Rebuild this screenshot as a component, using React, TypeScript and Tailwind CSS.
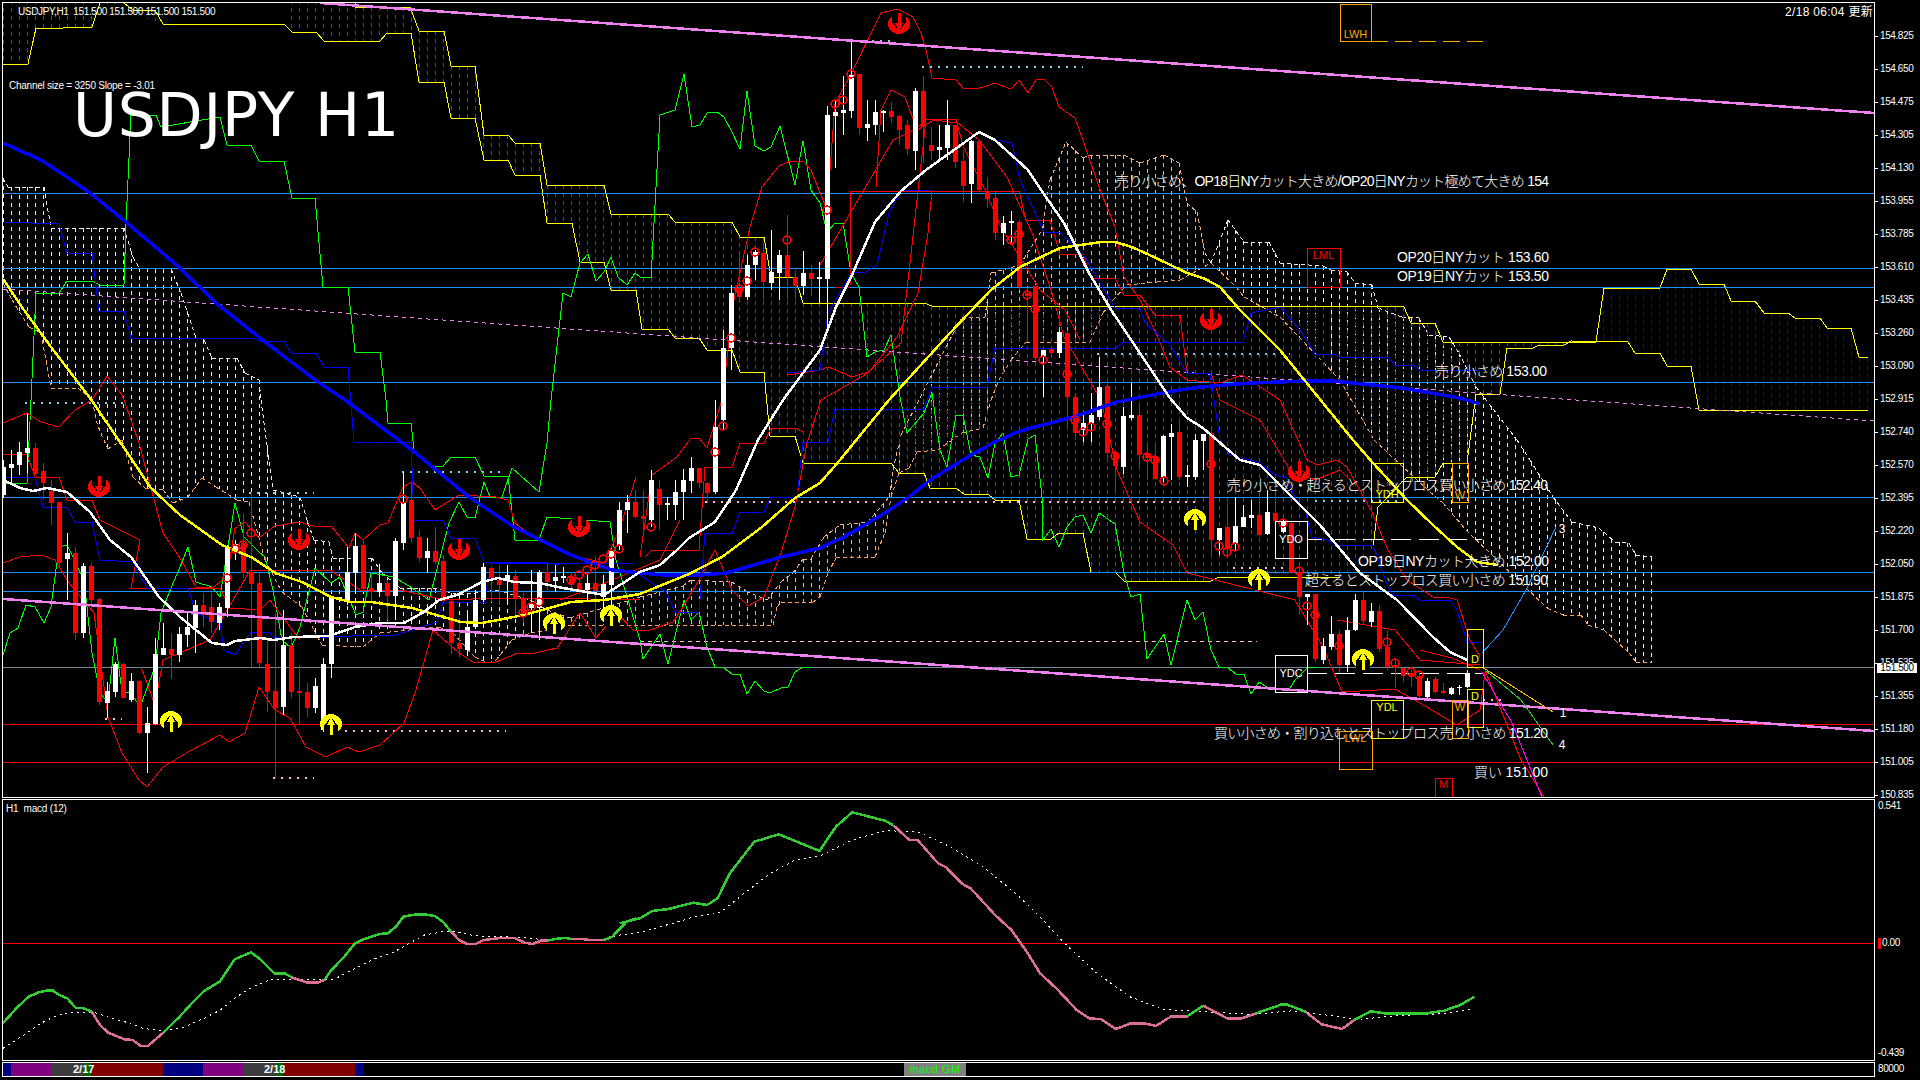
import React from "react";

type Pt = [number, number];

const parse = (s: string): Pt[] =>
  s.trim().split(/\s+/).map((p) => {
    const [x, y] = p.split(",").map(Number);
    return [x, y] as Pt;
  });

const yAt = (pts: Pt[], x: number) => {
  for (let i = 1; i < pts.length; i++) {
    if (x <= pts[i][0]) {
      const [x0, y0] = pts[i - 1];
      const [x1, y1] = pts[i];
      if (x1 === x0) return y1;
      return y0 + ((y1 - y0) * (x - x0)) / (x1 - x0);
    }
  }
  return pts[pts.length - 1][1];
};

// candles: [red?, high, bodyTop, bodyBottom, low], one every 8px from x=3
const candles: number[][] = [
  [0,460,467,495,498],[0,450,464,468,483],[0,442,452,465,475],[0,413,448,453,473],[1,443,448,474,475],[1,463,471,483,500],[1,480,491,503,525],[1,502,502,563,565],
  [0,533,553,559,600],[1,547,553,633,640],[0,563,566,633,638],[1,563,566,600,610],[1,598,599,702,705],[0,682,691,703,718],[0,662,664,692,697],[1,663,664,698,698],
  [0,673,681,700,702],[1,680,681,733,734],[0,707,723,733,773],[0,638,654,724,725],[0,623,648,655,655],[1,633,649,655,679],[0,627,634,655,662],[0,613,627,635,647],
  [0,600,605,628,653],[1,593,605,615,627],[1,593,607,622,633],[0,603,607,623,630],[0,545,548,608,617],[0,540,544,550,560],[1,513,543,573,578],[1,493,572,584,667],
  [1,573,583,663,667],[1,640,664,692,712],[1,613,691,708,778],[0,610,645,707,715],[1,633,645,692,698],[1,665,691,693,725],[1,683,692,708,717],[0,678,686,708,713],
  [0,658,664,730,732],[0,597,598,664,678],[0,597,597,598,600],[0,547,572,600,605],[0,533,546,573,592],[1,540,545,589,592],[1,572,588,592,602],[0,564,583,592,593],
  [1,580,583,596,620],[0,538,541,596,620],[0,472,503,543,550],[1,482,500,538,542],[1,530,537,558,562],[0,538,551,558,573],[1,527,551,562,564],[1,555,561,601,602],
  [1,600,601,643,654],[1,618,643,649,657],[0,613,627,650,656],[0,590,600,627,628],[0,563,567,600,602],[1,567,568,578,602],[1,565,580,585,605],[0,565,575,580,603],
  [1,570,576,599,617],[1,593,598,615,623],[0,570,603,608,633],[0,570,572,608,640],[1,563,572,582,590],[0,565,577,581,592],[0,567,576,578,583],[1,572,577,585,592],
  [1,577,583,590,592],[0,575,583,590,600],[1,557,583,591,640],[0,575,584,597,608],[0,548,550,585,610],[0,502,510,545,550],[0,495,502,510,533],[1,490,502,517,518],
  [1,490,516,519,530],[0,470,480,520,527],[1,480,489,505,530],[0,497,503,505,520],[0,480,492,505,520],[0,469,480,492,520],[0,457,468,481,493],[1,468,468,483,488],
  [1,482,483,493,503],[0,400,427,492,494],[0,330,348,420,430],[0,285,293,348,370],[1,255,288,297,300],[0,255,265,297,300],[0,250,252,265,280],[1,243,253,282,300],
  [0,230,272,283,290],[0,250,255,273,300],[1,215,255,277,300],[1,270,277,286,300],[0,251,273,286,295],[1,265,273,279,296],[0,262,277,279,303],[0,106,115,279,330],
  [0,100,112,116,168],[0,76,110,113,135],[0,42,75,111,118],[1,74,74,128,135],[0,100,124,128,141],[0,100,112,125,135],[0,110,111,113,132],[1,102,111,117,123],
  [1,115,116,130,145],[1,120,125,149,155],[0,88,91,151,170],[1,76,91,127,163],[1,127,145,151,160],[0,125,147,150,160],[0,100,125,148,160],[1,125,125,162,168],
  [1,150,161,186,202],[0,140,141,184,203],[1,140,141,190,192],[1,177,191,199,208],[1,190,198,233,240],[0,216,223,233,245],[0,211,221,223,245],[1,220,222,287,290],
  [1,288,293,296,342],[1,286,286,358,360],[0,350,350,356,397],[1,349,349,353,355],[0,330,332,353,358],[1,330,333,397,430],[1,393,397,433,440],[0,413,423,430,442],
  [0,393,415,423,442],[0,357,387,417,420],[1,380,386,453,462],[1,450,453,466,490],[0,407,416,467,474],[0,383,415,418,420],[1,403,415,455,468],[1,443,453,458,480],
  [1,443,457,479,480],[0,435,436,477,482],[0,424,433,437,480],[1,420,432,477,480],[0,465,475,477,487],[0,434,440,477,480],[0,434,434,441,470],[1,430,433,540,555],
  [0,528,528,540,555],[1,503,527,549,557],[0,497,526,543,550],[0,505,517,527,527],[0,500,515,518,528],[1,493,515,535,537],[0,490,512,534,535],[1,480,513,521,525],
  [0,520,522,532,533],[1,521,523,573,573],[1,568,572,597,615],[0,594,594,597,625],[1,594,594,659,662],[0,638,646,660,664],[0,616,634,647,650],[1,630,634,665,673],
  [0,617,630,665,672],[0,594,600,630,631],[1,592,600,621,624],[0,603,611,622,627],[1,605,611,649,652],[1,630,647,667,670],[1,660,665,668,688],[1,667,668,676,682],
  [1,670,673,677,687],[1,672,676,696,698],[0,678,681,697,698],[1,677,679,692,693],[1,683,691,693,694],[0,687,688,694,695],[0,685,687,688,695],[0,670,673,687,688],
];

const rings = parse(`851,74 835,104 843,100 827,210 787,240 755,252 747,281 739,289 731,338 1011,240 1019,234 1027,295 1035,309 1043,360 1067,374
  235,549 243,545 251,533 227,578 403,499 523,613 531,607 539,602 571,580 579,575 587,570 595,565 603,559 611,554 619,549 651,527 723,426 715,452
  1083,432 1091,427 1107,424 1075,420 1115,456 1147,457 1155,460 1164,481 1211,464 1219,546 1227,552 1235,547 1283,523 1299,571 1307,606 1315,615 1339,646 1387,642 1395,663 1411,672 1419,675`);

const sellSignals = parse("899,24 1211,320 99,487 299,540 459,550 579,527 1299,472");
const buySignals = parse("171,721 331,724 554,623 611,615 1195,519 1259,579 1363,659");

// senkou span lines, first cloud
const upperHatch = parse(`0,0 124,0 133,10 155,10 163,24 284,24 285,0 354,0 355,7 410,7 419,31 444,31 451,66 475,66 484,135 508,135 515,143 540,143 547,185 604,185 611,214 668,214 675,222 732,222 740,237 764,237 771,277 795,277 803,303 924,303 932,306 1376,306 1404,307 1411,323 1435,323 1443,342 1596,342`);
const lowerHatch = parse(`0,64 28,64 36,28 63,28 92,27 100,3 163,24 284,24 292,32 316,32 324,41 380,41 387,33 411,33 419,82 444,82 451,118 475,118 484,160 508,160 515,175 540,175 547,223 572,223 580,262 604,262 611,290 636,290 642,329 668,329 675,338 699,338 707,350 732,350 740,372 764,372 770,436 795,436 803,463 891,463 899,473 924,473 930,488 956,488 964,494 988,494 995,500 1019,500 1027,539 1051,539 1059,533 1083,533 1091,572 1115,572 1124,581 1211,581 1219,577 1340,577 1373,547 1378,507 1407,477 1435,477 1443,463 1467,463 1470,440 1476,398 1500,394 1507,348 1533,348 1539,345 1564,345 1571,341 1596,341`);
const blueUpper = parse("1596,342 1604,288 1660,288 1667,269 1691,269 1699,284 1724,284 1731,301 1755,301 1764,313 1788,313 1795,318 1820,318 1827,328 1851,328 1859,357 1868,357");
const blueLower = parse("1596,342 1628,342 1635,353 1660,353 1667,366 1691,366 1699,410 1868,410");

const yellowLines = [
  "3,64 28,64 36,28 63,28 92,27 100,3",
  "124,3 133,10 155,10 163,24 284,24 292,32 316,32 324,41 380,41 387,33 411,33 419,82 444,82 451,118 475,118 484,160 508,160 515,175 540,175 547,223 572,223 580,262 604,262 611,290 636,290 642,329 668,329 675,338 699,338 707,350 732,350 740,372 764,372 770,436 795,436 803,463 891,463 899,473 924,473 930,488 956,488 964,494 988,494 995,500 1019,500 1027,539 1051,539 1059,533 1083,533 1091,572 1115,572 1124,581 1211,581 1219,577 1340,577",
  "1373,547 1378,507 1407,477 1435,477 1443,463 1467,463 1470,440 1476,394 1500,394 1507,348 1533,348 1539,345 1564,345 1571,341 1628,342 1635,353 1660,353 1667,366 1691,366 1699,410 1868,410",
  "355,3 355,7 410,7 419,31 444,31 451,66 475,66 484,135 508,135 515,143 540,143 547,185 604,185 611,214 668,214 675,222 732,222 740,237 764,237 771,277 795,277 803,303 924,303 932,306 1376,306 1404,307 1411,323 1435,323 1443,342 1596,342 1604,288 1660,288 1667,269 1691,269 1699,284 1724,284 1731,301 1755,301 1764,313 1788,313 1795,318 1820,318 1827,328 1851,328 1859,357 1868,357",
];

// second cloud, drawn dashed
const upper2 = parse(`3,178 8,187 44,187 51,228 124,228 133,257 139,268 171,269 181,293 190,320 196,338 204,340 212,358 237,358 245,373 259,380 261,400 273,490 300,497 308,523 314,540 329,542 333,558 372,558 382,573 400,588 433,588 460,595 497,590 530,600 547,610 570,618 640,597 683,586 691,580 732,582 746,591 767,600 781,582 793,573 803,559 811,559 824,537 840,525 868,522 889,497 893,470 901,435 946,347 962,317 985,317 991,273 1020,265 1042,230 1050,180 1066,142 1083,158 1089,155 1124,155 1140,163 1164,155 1179,163 1187,203 1197,212 1205,253 1211,263 1228,220 1244,242 1269,242 1280,263 1323,266 1331,270 1347,272 1355,283 1372,285 1378,308 1402,317 1419,318 1429,335 1449,337 1459,353 1476,387 1517,440 1530,460 1553,497 1572,522 1599,528 1615,542 1629,543 1636,555 1652,557`);
const lower2 = parse(`3,283 12,300 29,327 41,333 51,388 78,388 92,400 98,427 108,449 122,440 133,477 145,488 163,490 173,503 188,497 202,478 216,487 237,500 249,502 265,560 282,592 302,607 314,630 322,645 363,647 380,633 439,627 453,633 475,657 488,663 496,660 512,640 531,633 547,630 571,625 773,625 777,607 781,602 813,602 820,597 828,573 836,558 875,557 885,533 891,497 899,473 909,468 917,452 938,450 962,433 983,428 991,400 999,380 1011,360 1026,342 1090,342 1103,313 1113,300 1127,285 1157,282 1180,280 1211,263 1236,287 1244,297 1280,317 1340,380 1374,440 1430,492 1443,503 1466,530 1521,583 1547,608 1563,615 1581,615 1588,625 1604,630 1615,640 1629,653 1636,662 1652,662`);

const greenLines = [
  // chikou
  "3,655 10,633 18,628 26,605 35,607 44,623 51,607 59,547 67,545 84,580 92,653 100,693 108,703 115,638 122,692 131,693 140,707 155,667 161,613 171,588 180,567 188,547 196,582 212,587 220,597 235,503 244,537 259,552 265,557 273,590 282,640 291,648 300,627 315,568 331,583 340,577 356,615 363,612 371,573 394,577 412,588 429,600 449,523 459,502 467,517 475,518 484,482 490,497 502,497 512,468 539,492 547,443 551,400 563,293 571,297 580,263 588,254 596,281 604,272 611,257 618,277 627,285 635,273 640,277 651,278 660,115 675,110 684,74 692,127 700,125 707,113 717,112 724,117 732,132 740,149 747,91 755,146 764,151 771,147 780,126 795,185 803,141 811,190 820,203 827,232 835,223 843,223 851,273 859,287 867,357 875,352 884,350 891,335 900,397 907,433 924,413 932,393 940,450 947,467 956,415 963,415 971,455 980,457 988,478 995,443 1003,433 1011,477 1019,475 1028,439 1035,435 1042,497 1043,540 1051,529 1059,547 1067,527 1075,517 1083,515 1091,533 1099,513 1115,524 1124,573 1131,597 1140,594 1147,659 1164,634 1171,665 1187,600 1195,620 1203,612 1211,650 1219,667 1228,668 1236,674 1244,674 1251,694 1259,682 1268,688 1290,688 1295,680 1307,668 1317,667",
  // slow line, stepped
  "3,483 27,483 31,400 36,293 59,293 67,281 92,281 100,285 124,285 126,223 131,115 156,115 161,127 220,117 227,145 251,145 259,161 284,161 292,198 315,198 323,287 348,287 355,352 380,352 386,400 388,423 411,423 414,450 433,466 443,466 451,457 475,457 484,476 508,476 515,540 539,540 547,517 610,522 616,560 640,640 643,659 660,634 668,664 684,600 691,620 699,612 707,647 715,667 724,668 732,674 740,674 747,694 755,681 764,691 770,693 781,688 788,687 795,672 803,667 811,667",
];

const redLines = [
  // upper band
  "3,423 27,413 41,422 59,427 75,410 92,400 107,376 122,395 124,400 139,443 163,533 180,558 196,587 212,588 227,577 235,528 245,522 259,538 275,526 300,522 316,527 331,526 349,548 355,533 363,540 380,525 388,523 403,487 412,482 420,488 435,510 459,495 496,497 508,500 515,523 531,535 571,555 604,563 618,533 628,503 636,477",
  "640,557 652,475 677,457 691,438 699,438 707,448 722,400 734,300 750,227 762,187 779,166 791,161 803,161 811,170 827,210 835,104 851,74 881,13 897,9 913,17 921,33 926,50 932,78 956,80 964,89 979,88 987,86 995,83 1011,89 1019,80 1028,93 1036,80 1044,79 1052,87 1059,107 1075,118 1083,140 1099,187 1115,227 1124,277 1140,300 1156,333 1170,367 1187,380 1220,383 1242,375 1280,400 1307,460 1317,465 1337,460 1347,467 1372,512 1388,550 1407,580 1433,597 1447,597 1457,600 1470,640 1480,657",
  // lower band
  "3,563 20,557 41,555 55,560 69,583 94,613 108,717 122,753 139,780 147,787 163,767 188,752 220,735 229,742 245,733 253,707 259,687 275,710 290,718 306,747 326,757 347,747 359,752 380,745 404,723 416,690 433,630 459,653 473,662 496,662 518,653 535,653 557,648 580,613 596,638 617,613 633,630 650,630 673,622 683,607 699,580 715,550 732,590 748,606 764,597 781,553 795,507 807,443 821,400 868,373 897,337 918,293 928,233 932,190",
  "876,187 881,110 891,90 905,97 917,130 934,120 958,123 979,140 1007,177 1032,233 1052,293 1064,337 1101,400 1117,470 1140,522 1173,545 1187,573 1295,600 1323,647 1342,692 1395,689 1420,703 1457,725 1480,710 1485,673",
  // kijun steps
  "3,454 27,454 35,477 59,477 67,500 92,500 100,520 140,540 131,588 220,588 230,608 260,610 270,600 300,640",
  "835,287 850,287 851,191 1019,191 1026,220 1050,220 1060,254 1083,254 1091,278 1115,278 1124,295 1140,295 1155,315 1180,315 1187,373 1211,373 1220,400 1260,420 1290,470 1315,480 1340,470 1350,480",
  "645,557 652,550 699,550 705,467 732,467 740,443 764,443 771,428 795,428 803,432",
  "787,375 820,370 828,367 852,377 868,372 901,343 926,120 956,119 963,146 985,190 1000,225 1040,290 1065,310 1080,340",
  "820,265 893,140 917,128 926,120",
  "141,667 155,705 163,660 210,640 233,600 250,570 300,570 330,570 360,590 400,590 445,600 500,598 540,598 640,600",
  "1420,650 1452,658 1480,670",
  "1337,620 1395,630 1420,660 1480,665",
  "560,600 600,585 660,560 680,520",
];

const blueLines = [
  "3,222 59,224 67,253 92,253 99,311 124,311 131,338 253,338 259,341 284,341 291,353 316,353 324,367 348,367 354,442 411,442 414,520 443,520 451,538 475,538 484,562 541,562 560,565",
  "3,477 35,477 43,507 67,507 75,522 92,522 100,560 133,562 147,588 188,588 196,613 220,623 224,650 235,655 251,632 269,632 273,637 331,637 371,635 396,635 437,622 443,602 484,602 492,563 633,563",
  "640,575 666,592 675,612 699,612 705,533 732,534 740,512 764,512 771,497 797,497 803,442 828,442 835,409 924,409 932,387 987,387 995,348 1115,348 1124,342 1243,342 1251,313 1280,307 1300,330 1315,354 1333,354 1339,357 1388,357 1395,365 1413,365 1420,370 1480,370",
  "787,373 820,370 828,313 852,272 866,272 877,265 889,213 901,191 930,190",
  "995,140 1012,143 1020,180 1044,232 1060,232 1083,254 1115,308 1140,309 1145,323 1170,345 1187,373 1210,373 1220,440 1230,455 1258,462 1275,475 1287,478 1295,498 1305,510 1312,537 1327,540 1335,545 1373,545 1388,587 1393,595 1413,595 1420,600 1450,600 1457,610 1467,642 1482,642",
];

const blueMA = "3,143 41,160 67,177 90,193 126,222 180,268 216,303 265,342 318,382 345,400 412,450 469,497 514,527 571,555 612,570 640,573 664,575 701,575 726,573 754,565 781,557 820,548 844,537 885,513 909,497 930,480 971,455 995,442 1020,431 1073,417 1117,402 1167,392 1200,387 1250,383 1307,381 1333,381 1402,388 1460,398 1480,404";
const yellowMA = "3,279 24,310 51,347 90,398 120,442 151,488 180,515 222,545 253,558 275,573 302,582 331,597 351,602 371,602 412,608 461,622 482,623 524,615 571,602 604,600 640,594 689,574 722,557 762,527 795,498 820,483 840,460 889,400 950,333 991,290 1020,267 1060,248 1101,242 1115,242 1132,247 1156,258 1187,273 1203,278 1220,287 1240,310 1280,350 1353,440 1373,463 1407,500 1433,525 1457,547 1477,562 1498,565";
const whiteMA = "3,480 20,488 33,491 47,488 67,492 90,512 110,540 131,557 159,597 180,617 212,643 227,645 235,641 261,638 273,640 294,637 329,636 355,627 380,623 404,623 424,612 439,600 457,595 482,582 498,578 514,582 539,583 563,588 604,595 620,585 640,572 660,565 677,550 689,538 715,522 736,490 758,440 783,400 820,350 836,307 852,275 875,222 901,191 926,170 979,132 995,140 1028,170 1048,200 1064,223 1089,273 1113,313 1138,350 1170,398 1187,418 1203,428 1240,460 1260,465 1290,495 1320,525 1360,573 1397,600 1433,637 1450,652 1467,660";

// [x1, x2, y, colour]
const dotted: [number, number, number, string][] = [
  [25, 124, 403, "#87ceeb"], [249, 314, 493, "#87ceeb"], [402, 506, 472, "#87ceeb"], [856, 891, 41, "#87ceeb"], [922, 1083, 67, "#87ceeb"], [1097, 1290, 354, "#87ceeb"], [1315, 1400, 501, "#87ceeb"],
  [105, 122, 719, "#ffc0cb"], [345, 506, 731, "#ffc0cb"], [273, 314, 778, "#ffc0cb"], [705, 877, 502, "#ffc0cb"], [905, 1199, 502, "#ffc0cb"], [1233, 1283, 568, "#ffc0cb"], [1483, 1507, 700, "#ffc0cb"],
];

const annotations: [string, number, number, number][] = [
  ["売り小さめ、OP18日NYカット大きめ/OP20日NYカット極めて大きめ 154", 1115, 434, 181],
  ["OP20日NYカット 153.60", 1397, 152, 257],
  ["OP19日NYカット 153.50", 1397, 152, 276],
  ["売り小さめ 153.00", 1435, 112, 371],
  ["売り小さめ・超えるとストップロス買い小さめ 152.40", 1227, 321, 485],
  ["OP19日NYカット大きめ 152.00", 1358, 191, 561],
  ["超えるとストップロス買い小さめ 151.90", 1305, 243, 580],
  ["買い小さめ・割り込むとストップロス売り小さめ 151.20", 1214, 334, 733],
  ["買い 151.00", 1474, 74, 772],
];

// boxes: x1, y1, x2, y2, label, label y, colour
const boxes: [number, number, number, number, string, number, string][] = [
  [1371, 463, 1403, 502, "YDH", 494, "#ffff00"],
  [1371, 700, 1403, 738, "YDL", 707, "#ffff00"],
  [1467, 629, 1483, 667, "D", 659, "#ffff00"],
  [1467, 689, 1483, 727, "D", 696, "#ffff00"],
  [1452, 463, 1468, 502, "W", 495, "#ffa500"],
  [1452, 700, 1468, 738, "W", 707, "#ffa500"],
  [1339, 731, 1372, 769, "LWL", 738, "#ffa500"],
  [1340, 4, 1371, 41, "LWH", 34, "#ffa500"],
  [1307, 248, 1340, 287, "LML", 255, "#ff0000"],
  [1435, 778, 1452, 800, "M", 784, "#ff0000"],
  [1275, 521, 1307, 558, "YDO", 539, "#ffffff"],
  [1275, 655, 1307, 692, "YDC", 673, "#ffffff"],
];

const hLines: [number, string][] = [
  [193, "#1e90ff"], [268, "#1e90ff"], [287, "#1e90ff"], [382, "#1e90ff"], [497, "#1e90ff"], [572, "#1e90ff"], [591, "#1e90ff"],
  [667, "#778899"], [724, "#ff0000"], [762, "#ff0000"],
];

const prices = ["154.825", "154.650", "154.475", "154.305", "154.130", "153.955", "153.785", "153.610", "153.435", "153.260", "153.090", "152.915", "152.740", "152.570", "152.395", "152.220", "152.050", "151.875", "151.700", "151.535", "151.355", "151.180", "151.005", "150.835"];

// macd pane traces, read off in crop coordinates
const fromLeft = (s: string) => parse(s).map(([x, y]) => [x / 2.45, 780 + y / 3] as Pt);
const fromRight = (s: string) => parse(s).map(([x, y]) => [640 + x / 1.225, 780 + y / 3] as Pt);
const toPoints = (p: Pt[]) => p.map(([x, y]) => `${x.toFixed(1)},${y.toFixed(1)}`).join(" ");

const macdGreen = [
  fromLeft("7,730 40,685 70,650 95,637 115,632 130,632 145,645 165,655 185,683 205,685 225,695"),
  fromLeft("400,758 440,710 470,670 500,633 538,605 575,538 615,517 640,540 672,580 697,580 715,592"),
  fromLeft("795,600 810,572 840,535 870,490 890,478 930,462 950,460 970,440 988,410 1015,404 1045,404 1065,408 1085,425 1105,455"),
  fromLeft("1340,482 1365,476 1385,474 1400,477"),
  fromLeft("1480,480 1500,470 1535,425 1560,415"),
  fromRight("-25,430 0,415 15,393 35,387 65,368 82,375 95,355 110,280 140,185 170,163 220,213 240,140 260,97 300,122 310,135"),
  fromRight("670,710 690,677"),
  fromRight("755,700 785,674 793,674 815,695"),
  fromRight("875,720 895,694 915,701 960,701 985,692 1005,675 1022,650"),
];
const macdPink = [
  fromLeft("225,695 245,735 265,758 305,778 325,780 345,798 362,798 400,758"),
  fromLeft("715,592 750,607 780,607 795,600"),
  fromLeft("1105,455 1125,480 1145,492 1165,492 1185,480 1225,474 1260,474 1285,488 1305,492 1325,482 1340,482"),
  fromLeft("1400,477 1425,477 1445,480 1480,480"),
  fromRight("310,135 330,180 340,180 365,250 375,262 395,312 405,325 435,405 455,450 475,520 490,580 510,625 535,690 550,715 565,718 583,747 600,731 620,731 632,738 650,710 670,710"),
  fromRight("690,677 720,716 735,716 755,700"),
  fromRight("815,695 835,733 860,747 875,720"),
];
const macdSignal = [
  ...fromLeft("7,805 40,780 70,755 100,730 130,712 160,700 200,696 230,697 270,713 310,727 350,745 400,753 450,742 500,715 540,690 580,650 620,620 660,600 710,597 780,600 820,597 870,565 920,535 960,520 1000,492 1040,465 1085,455 1120,455 1160,467 1230,470 1290,474 1340,480 1400,476 1480,480 1520,465 1568,457"),
  ...fromRight("40,430 70,408 100,395 130,335 160,280 190,240 220,228 260,180 300,152 340,155 380,200 420,260 460,340 490,410 520,490 560,580 600,650 640,688 690,695 750,703 800,692 840,705 880,718 930,707 990,700 1018,687"),
];

function Hatch({ up, low, from, to, color }: { up: Pt[]; low: Pt[]; from: number; to: number; color: string | ((x: number) => string) }) {
  const lines = [];
  for (let x = 3; x <= to; x += 8) {
    if (x < from) continue;
    const a = yAt(up, x);
    const b = yAt(low, x);
    if (Math.abs(a - b) < 2) continue;
    lines.push(
      <line key={x} x1={x} x2={x} y1={Math.min(a, b)} y2={Math.max(a, b)} stroke={typeof color === "string" ? color : color(x)} strokeDasharray="4 4" />
    );
  }
  return <>{lines}</>;
}

const cloud2Colour = (x: number) => (x < 520 ? "#f8e6e6" : x < 1211 ? "#f4b183" : "#f8e6e6");

function CloudEdge({ pts, orange }: { pts: Pt[]; orange?: boolean }) {
  return (
    <>
      {pts.slice(1).map((p, i) => (
        <line
          key={i}
          x1={pts[i][0]}
          y1={pts[i][1]}
          x2={p[0]}
          y2={p[1]}
          strokeDasharray="4 3"
          stroke={orange ? "#f4a460" : cloud2Colour(p[0])}
        />
      ))}
    </>
  );
}

function Signal({ x, y, up }: { x: number; y: number; up?: boolean }) {
  const c = up ? "#ffff00" : "#ff0000";
  return (
    <g transform={`translate(${x} ${y}) scale(1 ${up ? -1 : 1})`}>
      <ellipse rx={11} ry={10} fill={c} />
      <path d="M-7,-11 V-2 L-1,6 H1 L7,-2 V-11 Z" fill="#000" />
      <path d="M-1.5,-11 H1.5 V-1 H4 L0,7 L-4,-1 H-1.5 Z" fill={c} />
    </g>
  );
}

function Chart() {
  return (
    <svg width={1871} height={794} viewBox="3 3 1871 794" shapeRendering="crispEdges" fill="none" className="block">
      <Hatch up={upper2} low={lower2} from={3} to={1652} color={cloud2Colour} />
      <CloudEdge pts={upper2} />
      <CloudEdge pts={lower2} orange />
      <Hatch up={upperHatch} low={lowerHatch} from={3} to={1596} color="#ff0000" />
      <Hatch up={blueUpper} low={blueLower} from={1600} to={1868} color="#0000ff" />
      {yellowLines.map((l, i) => <polyline key={i} points={l} stroke="#ffff00" />)}

      {hLines.map(([y, c]) => <line key={y} x1={3} x2={1874} y1={y} y2={y} stroke={c} />)}
      <line x1={3} y1={289} x2={1874} y2={421} stroke="#ee82ee" strokeDasharray="4 4" />
      {dotted.map(([x1, x2, y, c], i) => <line key={i} x1={x1} x2={x2} y1={y} y2={y} stroke={c} strokeWidth={2} strokeDasharray="2 6" />)}
      <line x1={640} x2={1257} y1={641} y2={641} stroke="#ffc0cb" strokeDasharray="4 4" />
      <line x1={1307} x2={1482} y1={539} y2={539} stroke="#fff" strokeDasharray="20 8" />
      <line x1={1307} x2={1482} y1={673} y2={673} stroke="#fff" strokeDasharray="20 8" />
      <line x1={1371} x2={1483} y1={41} y2={41} stroke="#ffa500" strokeDasharray="17 7" />

      {greenLines.map((l, i) => <polyline key={i} points={l} stroke="#00ff00" />)}
      {redLines.map((l, i) => <polyline key={i} points={l} stroke="#ff0000" />)}
      {blueLines.map((l, i) => <polyline key={i} points={l} stroke="#0000ff" />)}

      {candles.map(([red, h, t, b, l], i) => {
        const x = 3 + 8 * i;
        const c = red ? "#ff0000" : "#ffffff";
        return (
          <g key={i}>
            <line x1={x} x2={x} y1={h} y2={l} stroke={c} />
            <rect x={x - 2} y={t} width={5} height={Math.max(b - t, 1)} fill={c} />
          </g>
        );
      })}

      <polyline points={blueMA} stroke="#0000ff" strokeWidth={3.5} />
      <polyline points={yellowMA} stroke="#ffff00" strokeWidth={2.5} />
      <polyline points={whiteMA} stroke="#ffffff" strokeWidth={2.5} />
      <line x1={320} y1={3} x2={1874} y2={113} stroke="#ee82ee" strokeWidth={2.5} />
      <line x1={3} y1={599} x2={1874} y2={731} stroke="#ee82ee" strokeWidth={2.5} />

      {rings.map(([x, y], i) => <circle key={i} cx={x} cy={y} r={4} stroke="#ff0000" strokeWidth={1.5} />)}
      {sellSignals.map(([x, y]) => <Signal key={x} x={x} y={y} />)}
      {buySignals.map(([x, y]) => <Signal key={x} x={x} y={y} up />)}

      {/* forecast lines from the last bar */}
      <polyline points="1482,667 1553,712" stroke="#ffc000" />
      <polyline points="1485,670 1521,700 1553,745" stroke="#32cd32" />
      <polyline points="1482,653 1503,630 1526,590 1556,527" stroke="#1e90ff" />
      <polyline points="1485,670 1521,760 1544,797" stroke="#ff0000" />
      <polyline points="1482,672 1512,723 1542,797" stroke="#ff00ff" />

      {boxes.map(([x1, y1, x2, y2, label, ly, c]) => (
        <g key={label + y1}>
          <rect x={x1} y={y1} width={x2 - x1} height={y2 - y1} stroke={c} />
          <text x={(x1 + x2) / 2} y={ly} fill={c} textAnchor="middle" dominantBaseline="central" className="font-['Liberation_Sans',sans-serif] text-[11px]">{label}</text>
        </g>
      ))}
      {[["1", 1563, 713], ["3", 1562, 529], ["4", 1562, 745]].map(([t, x, y]) => (
        <text key={t as string} x={x as number} y={y as number} fill="#fff" textAnchor="middle" dominantBaseline="central" className="font-['Liberation_Sans',sans-serif] text-[12px]">{t}</text>
      ))}
      {annotations.map(([t, x, w, y]) => (
        <text key={t} x={x} y={y} textLength={w} lengthAdjust="spacing" fill="#fff" dominantBaseline="central" className="font-['Liberation_Sans','Noto_Sans_CJK_JP',sans-serif] text-[14px] font-light">{t}</text>
      ))}
    </svg>
  );
}

function MacdChart() {
  return (
    <svg width={1871} height={260} viewBox="3 800 1871 260" shapeRendering="crispEdges" fill="none" className="block">
      <line x1={3} x2={1874} y1={943} y2={943} stroke="#ff0000" />
      <polyline points={toPoints(macdSignal)} stroke="#fff" strokeDasharray="2 4" />
      {macdPink.map((p, i) => <polyline key={i} points={toPoints(p)} stroke="#db7093" strokeWidth={2.5} />)}
      {macdGreen.map((p, i) => <polyline key={i} points={toPoints(p)} stroke="#32cd32" strokeWidth={2.5} />)}
    </svg>
  );
}

const sans = "font-['Liberation_Sans',sans-serif]";

export default function App() {
  return (
    <div className={`w-[1920px] h-[1080px] bg-black text-white overflow-hidden pt-[2px] pl-[2px] ${sans}`}>
      {/* price pane */}
      <div className="flex h-[796px]">
        <div className="relative w-[1873px] h-full border border-white overflow-hidden">
          <Chart />
          <div className="absolute left-[15px] top-[3px] text-[10px] leading-[12px] tracking-[-0.36px] whitespace-pre">USDJPY,H1  151.500 151.500 151.500 151.500</div>
          <div className="absolute left-[6px] top-[77px] text-[10px] leading-[12px] tracking-[-0.25px] whitespace-pre">Channel size = 3250 Slope = -3.01</div>
          <div className="absolute left-[70px] top-[89px] text-[60px] leading-[46px] tracking-[0.8px] font-['DejaVu_Sans',sans-serif] whitespace-pre">USDJPY H1</div>
          <div className="absolute right-[1px] top-[2px] text-[12px] leading-[14px] tracking-[0.3px] font-['Liberation_Sans','Noto_Sans_CJK_JP',sans-serif]">2/18 06:04 更新</div>
        </div>
        <div className="relative flex-1 flex flex-col gap-[23px] pt-[29px] text-[10px] leading-[10px] tracking-[-0.4px]">
          {prices.map((p) => (
            <div key={p} className="flex items-center h-[10px] shrink-0">
              <span className="w-[3px] h-px bg-white mr-[2px]" />
              {p}
            </div>
          ))}
          <div className="absolute left-[2px] top-[661px] w-[40px] h-[10px] bg-white text-black text-center">151.500</div>
        </div>
      </div>

      {/* macd pane */}
      <div className="flex h-[262px] mt-[1px]">
        <div className="relative w-[1873px] h-full border border-white overflow-hidden">
          <MacdChart />
          <div className="absolute left-[3px] top-[3px] text-[10px] leading-[12px] tracking-[-0.2px] whitespace-pre">H1  macd (12)</div>
        </div>
        <div className="flex-1 flex flex-col pt-[2px] pl-[3px] text-[10px] leading-[10px] tracking-[-0.4px]">
          <div className="h-[10px]">0.541</div>
          <div className="h-[10px] mt-[127px] flex items-center">
            <span className="w-[3px] h-[11px] bg-[#ff0000] mr-[1px]" />
            0.00
          </div>
          <div className="h-[10px] mt-[100px]">-0.439</div>
        </div>
      </div>

      {/* time strip */}
      <div className="flex h-[15px] mt-[1px]">
        <div className="w-[1873px] h-full border border-white flex items-stretch overflow-hidden">
          <div className="w-[8px] bg-[#000080]" />
          <div className="w-[40px] bg-[#800080]" />
          <div className="w-[32px] bg-[#3c3c3c] relative">
            <span className="absolute left-[22px] top-0 text-[11px] leading-[13px] font-bold">2/17</span>
          </div>
          <div className="w-[8px] bg-[#006400]" />
          <div className="w-[72px] bg-[#800000]" />
          <div className="w-[40px] bg-[#000080]" />
          <div className="w-[40px] bg-[#800080]" />
          <div className="w-[32px] bg-[#3c3c3c] relative">
            <span className="absolute left-[21px] top-0 text-[11px] leading-[13px] font-bold">2/18</span>
          </div>
          <div className="w-[8px] bg-[#006400]" />
          <div className="w-[72px] bg-[#800000]" />
          <div className="w-[8px] bg-[#000080]" />
          <div className="ml-[541px] w-[62px] bg-[#808080] text-[#00ff00] text-[11px] leading-[13px] text-center tracking-[0.5px]">macd GM</div>
        </div>
        <div className="pl-[3px] text-[10px] leading-[14px] tracking-[-0.4px]">80000</div>
      </div>
    </div>
  );
}
